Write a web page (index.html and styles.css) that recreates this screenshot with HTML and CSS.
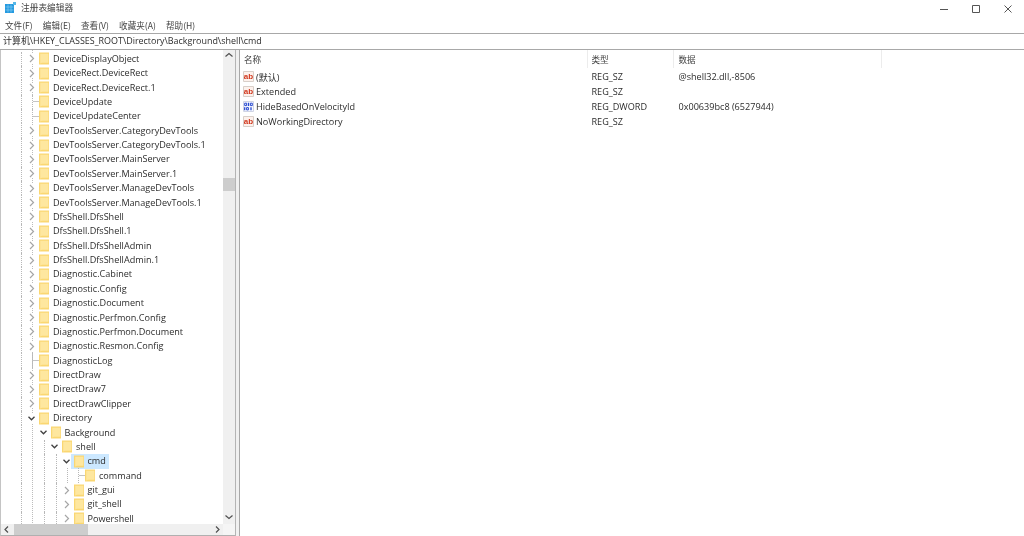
FILE: index.html
```html
<!DOCTYPE html>
<html lang="zh">
<head>
<meta charset="utf-8">
<title>注册表编辑器</title>
<link rel="stylesheet" href="styles.css">
</head>
<body>
<svg class="defs" width="0" height="0">
  <symbol id="folder" viewBox="0 0 10 13"><path d="M0 .5H10V12.5H0Z" fill="#fad772"/><path d="M1.2 1.8H9.4V10.8H3L1.2 11.4Z" fill="#fee79f"/></symbol>
  <symbol id="right" viewBox="0 0 7 9"><path d="M2 1L5.5 4.5L2 8" fill="none" stroke="#a6a6a6" stroke-width="1.2"/></symbol>
  <symbol id="down" viewBox="0 0 7 9"><path d="M.5 2.8L3.5 5.8L6.5 2.8" fill="none" stroke="#404040" stroke-width="1.3"/></symbol>
  <symbol id="bin" viewBox="0 0 11 11"><path d="M.5 .5H10.5V10.5H.5Z" fill="#f6f8ff" stroke="#d0d4e4"/><path d="M1.7 2.2H3.6V4.6H1.7ZM7.4 2.2H9.3V4.6H7.4ZM3.6 6.6H5.4V8.9H3.6Z" fill="none" stroke="#2a4bd0" stroke-width="1"/><path d="M5.5 1.8V5M1.7 6.2V9.2M8 6.2V9.2" fill="none" stroke="#2a4bd0" stroke-width="1.3"/></symbol>
</svg>
<div class="app">
  <header class="titlebar">
    <svg class="appicon" viewBox="0 0 11 11"><path d="M0 2H9V11H0Z" fill="#259ae0"/><path d="M.5 5H8.5M.5 8H8.5M3 2.5V10.5M6 2.5V10.5" stroke="#8fd0f2" stroke-width=".6" fill="none"/><path d="M8 0H11V3H8Z" fill="#57b8e8"/></svg>
    <span class="apptitle">注册表编辑器</span>
    <div class="winbtns">
      <svg viewBox="0 0 10 10"><path d="M1 5.5H9" stroke="#555" fill="none"/></svg>
      <svg viewBox="0 0 10 10"><path d="M1.5 1.5H8.5V8.5H1.5Z" stroke="#555" fill="none"/></svg>
      <svg viewBox="0 0 10 10"><path d="M1.5 1.5L8.5 8.5M8.5 1.5L1.5 8.5" stroke="#555" fill="none"/></svg>
    </div>
  </header>
  <nav class="menubar">
    <span>文件(F)</span><span>编辑(E)</span><span>查看(V)</span><span>收藏夹(A)</span><span>帮助(H)</span>
  </nav>
  <div class="address">计算机\HKEY_CLASSES_ROOT\Directory\Background\shell\cmd</div>
  <main class="main">
    <section class="treepane">
      <div class="treearea">
        <div class="tree">
          <div class="row"><i class="g0"></i><svg class="tw"><use href="#right"/></svg><svg class="fo"><use href="#folder"/></svg><span>DeviceDisplayObject</span></div>
          <div class="row"><i class="g0"></i><svg class="tw"><use href="#right"/></svg><svg class="fo"><use href="#folder"/></svg><span>DeviceRect.DeviceRect</span></div>
          <div class="row"><i class="g0"></i><svg class="tw"><use href="#right"/></svg><svg class="fo"><use href="#folder"/></svg><span>DeviceRect.DeviceRect.1</span></div>
          <div class="row"><i class="g0"></i><i class="leaf"></i><svg class="fo"><use href="#folder"/></svg><span>DeviceUpdate</span></div>
          <div class="row"><i class="g0"></i><i class="leaf"></i><svg class="fo"><use href="#folder"/></svg><span>DeviceUpdateCenter</span></div>
          <div class="row"><i class="g0"></i><svg class="tw"><use href="#right"/></svg><svg class="fo"><use href="#folder"/></svg><span>DevToolsServer.CategoryDevTools</span></div>
          <div class="row"><i class="g0"></i><svg class="tw"><use href="#right"/></svg><svg class="fo"><use href="#folder"/></svg><span>DevToolsServer.CategoryDevTools.1</span></div>
          <div class="row"><i class="g0"></i><svg class="tw"><use href="#right"/></svg><svg class="fo"><use href="#folder"/></svg><span>DevToolsServer.MainServer</span></div>
          <div class="row"><i class="g0"></i><svg class="tw"><use href="#right"/></svg><svg class="fo"><use href="#folder"/></svg><span>DevToolsServer.MainServer.1</span></div>
          <div class="row"><i class="g0"></i><svg class="tw"><use href="#right"/></svg><svg class="fo"><use href="#folder"/></svg><span>DevToolsServer.ManageDevTools</span></div>
          <div class="row"><i class="g0"></i><svg class="tw"><use href="#right"/></svg><svg class="fo"><use href="#folder"/></svg><span>DevToolsServer.ManageDevTools.1</span></div>
          <div class="row"><i class="g0"></i><svg class="tw"><use href="#right"/></svg><svg class="fo"><use href="#folder"/></svg><span>DfsShell.DfsShell</span></div>
          <div class="row"><i class="g0"></i><svg class="tw"><use href="#right"/></svg><svg class="fo"><use href="#folder"/></svg><span>DfsShell.DfsShell.1</span></div>
          <div class="row"><i class="g0"></i><svg class="tw"><use href="#right"/></svg><svg class="fo"><use href="#folder"/></svg><span>DfsShell.DfsShellAdmin</span></div>
          <div class="row"><i class="g0"></i><svg class="tw"><use href="#right"/></svg><svg class="fo"><use href="#folder"/></svg><span>DfsShell.DfsShellAdmin.1</span></div>
          <div class="row"><i class="g0"></i><svg class="tw"><use href="#right"/></svg><svg class="fo"><use href="#folder"/></svg><span>Diagnostic.Cabinet</span></div>
          <div class="row"><i class="g0"></i><svg class="tw"><use href="#right"/></svg><svg class="fo"><use href="#folder"/></svg><span>Diagnostic.Config</span></div>
          <div class="row"><i class="g0"></i><svg class="tw"><use href="#right"/></svg><svg class="fo"><use href="#folder"/></svg><span>Diagnostic.Document</span></div>
          <div class="row"><i class="g0"></i><svg class="tw"><use href="#right"/></svg><svg class="fo"><use href="#folder"/></svg><span>Diagnostic.Perfmon.Config</span></div>
          <div class="row"><i class="g0"></i><svg class="tw"><use href="#right"/></svg><svg class="fo"><use href="#folder"/></svg><span>Diagnostic.Perfmon.Document</span></div>
          <div class="row"><i class="g0"></i><svg class="tw"><use href="#right"/></svg><svg class="fo"><use href="#folder"/></svg><span>Diagnostic.Resmon.Config</span></div>
          <div class="row"><i class="g0"></i><i class="leaf"></i><svg class="fo"><use href="#folder"/></svg><span>DiagnosticLog</span></div>
          <div class="row"><i class="g0"></i><svg class="tw"><use href="#right"/></svg><svg class="fo"><use href="#folder"/></svg><span>DirectDraw</span></div>
          <div class="row"><i class="g0"></i><svg class="tw"><use href="#right"/></svg><svg class="fo"><use href="#folder"/></svg><span>DirectDraw7</span></div>
          <div class="row"><i class="g0"></i><svg class="tw"><use href="#right"/></svg><svg class="fo"><use href="#folder"/></svg><span>DirectDrawClipper</span></div>
          <div class="row"><i class="g0"></i><svg class="tw"><use href="#down"/></svg><svg class="fo"><use href="#folder"/></svg><span>Directory</span></div>
          <div class="row"><i class="g0"></i><i class="g"></i><svg class="tw"><use href="#down"/></svg><svg class="fo"><use href="#folder"/></svg><span>Background</span></div>
          <div class="row"><i class="g0"></i><i class="g"></i><i class="g"></i><svg class="tw"><use href="#down"/></svg><svg class="fo"><use href="#folder"/></svg><span>shell</span></div>
          <div class="row"><i class="g0"></i><i class="g"></i><i class="g"></i><i class="g"></i><svg class="tw"><use href="#down"/></svg><div class="selbox"><svg class="fo"><use href="#folder"/></svg><span>cmd</span></div></div>
          <div class="row"><i class="g0"></i><i class="g"></i><i class="g"></i><i class="g"></i><i class="g"></i><i class="leaf"></i><svg class="fo"><use href="#folder"/></svg><span>command</span></div>
          <div class="row"><i class="g0"></i><i class="g"></i><i class="g"></i><i class="g"></i><svg class="tw"><use href="#right"/></svg><svg class="fo"><use href="#folder"/></svg><span>git_gui</span></div>
          <div class="row"><i class="g0"></i><i class="g"></i><i class="g"></i><i class="g"></i><svg class="tw"><use href="#right"/></svg><svg class="fo"><use href="#folder"/></svg><span>git_shell</span></div>
          <div class="row"><i class="g0"></i><i class="g"></i><i class="g"></i><i class="g"></i><svg class="tw"><use href="#right"/></svg><svg class="fo"><use href="#folder"/></svg><span>Powershell</span></div>
        </div>
        <div class="vscroll">
          <svg class="sb-arrow"><path d="M2.5 6.5L6 3.5L9.5 6.5" fill="none" stroke="#505050" stroke-width="1.2"/></svg>
          <div class="vtrack"><div class="vthumb"></div></div>
          <svg class="sb-arrow"><path d="M2.5 3.5L6 6.5L9.5 3.5" fill="none" stroke="#505050" stroke-width="1.2"/></svg>
        </div>
      </div>
      <div class="hscroll">
        <svg class="sb-harrow"><path d="M7 2.5L4 5.5L7 8.5" fill="none" stroke="#505050" stroke-width="1.2"/></svg>
        <div class="htrack"><div class="hthumb"></div></div>
        <svg class="sb-harrow"><path d="M5 2.5L8 5.5L5 8.5" fill="none" stroke="#505050" stroke-width="1.2"/></svg>
        <div class="corner"></div>
      </div>
    </section>
    <div class="splitter"></div>
    <section class="listpane">
      <div class="listhead">
        <div class="c1">名称</div><div class="c2">类型</div><div class="c3">数据</div>
      </div>
      <div class="listrows">
        <div class="lrow"><div class="c1"><svg class="vi" viewBox="0 0 11 11"><path d="M.5 .5H10.5V10.5H.5Z" fill="#fdf1ec" stroke="#d8cfc9"/><text x="5.5" y="8" text-anchor="middle" class="abtext">ab</text></svg>(默认)</div><div class="c2">REG_SZ</div><div class="c3">@shell32.dll,-8506</div></div>
        <div class="lrow"><div class="c1"><svg class="vi" viewBox="0 0 11 11"><path d="M.5 .5H10.5V10.5H.5Z" fill="#fdf1ec" stroke="#d8cfc9"/><text x="5.5" y="8" text-anchor="middle" class="abtext">ab</text></svg>Extended</div><div class="c2">REG_SZ</div><div class="c3"></div></div>
        <div class="lrow"><div class="c1"><svg class="vi"><use href="#bin"/></svg>HideBasedOnVelocityId</div><div class="c2">REG_DWORD</div><div class="c3">0x00639bc8 (6527944)</div></div>
        <div class="lrow"><div class="c1"><svg class="vi" viewBox="0 0 11 11"><path d="M.5 .5H10.5V10.5H.5Z" fill="#fdf1ec" stroke="#d8cfc9"/><text x="5.5" y="8" text-anchor="middle" class="abtext">ab</text></svg>NoWorkingDirectory</div><div class="c2">REG_SZ</div><div class="c3"></div></div>
      </div>
    </section>
  </main>
</div>
</body>
</html>
```
FILE: styles.css
```css
* { box-sizing: border-box; }
html, body { margin: 0; height: 100%; background: #fff; overflow: hidden; }
body { font-family: "Open Sans", "Noto Sans CJK SC", sans-serif; font-size: 9.1px; color: #2c2c2c; }
.defs { position: absolute; }
.abtext { font: bold 8px "Liberation Sans", sans-serif; fill: #d0361c; }
.app { width: 1024px; height: 536px; display: flex; flex-direction: column; filter: blur(0.4px); }

.titlebar { height: 18px; display: flex; align-items: center; padding: 0 0 3px 5px; flex: none; }
.appicon { width: 11px; height: 11px; margin-right: 5px; }
.apptitle { font-family: "Noto Sans CJK SC", sans-serif; font-size: 8.7px; color: #444; }
.winbtns { margin-left: auto; display: flex; gap: 22px; padding-right: 11px; margin-top: 3px; }
.winbtns svg { width: 10px; height: 10px; }

.menubar { height: 15px; display: flex; padding: 0 0 2px 5px; gap: 10.1px; align-items: center; flex: none; font-family: "Noto Sans CJK SC", sans-serif; font-size: 8.6px; color: #444; }

.address { height: 17px; border-top: 1px solid #a8a8a8; border-bottom: 1px solid #a8a8a8; padding-left: 3px; line-height: 14px; flex: none; white-space: nowrap; font-size: 8.95px; }

.main { flex: 1; display: flex; min-height: 0; }
.treepane { width: 235px; display: flex; flex-direction: column; border-left: 1px solid #c4c4c4; border-bottom: 1px solid #b0b0b0; flex: none; }
.treearea { flex: 1; display: flex; min-height: 0; }
.tree { flex: 1; padding-top: 1.6px; overflow: hidden; background: repeating-linear-gradient(#bcbcbc 0 1px, transparent 1px 2px) 31px 0 / 1px 100% no-repeat; }
.row { height: 14.375px; display: flex; align-items: center; white-space: nowrap; }
.row span { margin-left: 3px; padding: 0 1px; line-height: 14px; }
.g0 { width: 21px; height: 100%; flex: none; border-right: 1px dotted #b8b8b8; }
.g { width: 11.5px; height: 100%; flex: none; border-right: 1px dotted #b8b8b8; }
.g0 + .g { border-right-color: transparent; }
.tw { width: 7px; height: 9px; margin: 0 4px 0 6px; flex: none; background: #fff; }
.leaf { width: 7px; height: 100%; margin-left: 10px; flex: none; border-left: 1px dotted #b8b8b8; background: linear-gradient(#c4c4c4, #c4c4c4) 0 50% / 100% 1px no-repeat; }
.fo { width: 10px; height: 13px; flex: none; }
.selbox { display: flex; align-items: center; height: 15px; background: #cce8ff; margin-left: -2.5px; padding: 0 2px 0 2.5px; }

.vscroll { width: 12px; display: flex; flex-direction: column; background: #f0f0f0; flex: none; }
.sb-arrow { width: 12px; height: 12px; flex: none; }
.vtrack { flex: 1; padding-top: 116px; }
.vthumb { height: 13px; background: #cdcdcd; }
.hscroll { height: 11px; display: flex; background: #f0f0f0; flex: none; }
.sb-harrow { width: 12px; height: 11px; flex: none; }
.htrack { flex: 1; padding-left: 1px; }
.hthumb { width: 74px; height: 100%; background: #cdcdcd; }
.corner { width: 12px; background: #f5f5f5; flex: none; }

.splitter { width: 5px; border-left: 1.5px solid #b4b4b4; border-right: 1px solid #a8a8a8; background: #f0f0f0; flex: none; }

.listpane { flex: 1; min-width: 0; }
.listhead { height: 18px; display: flex; align-items: center; font-family: "Noto Sans CJK SC", sans-serif; font-size: 8.6px; color: #444; }
.listhead .c1, .listhead .c2, .listhead .c3 { height: 100%; line-height: 18px; border-right: 1px solid #ececec; }
.c1 { width: 347.5px; padding-left: 4px; display: flex; align-items: center; white-space: nowrap; }
.c2 { width: 86px; padding-left: 4px; white-space: nowrap; }
.c3 { width: 208px; padding-left: 5px; white-space: nowrap; }
.listrows { padding-top: 1px; }
.lrow { height: 15px; display: flex; align-items: center; }
.lrow .c1 { padding-left: 3px; }
.vi { width: 11px; height: 11px; margin-right: 2px; flex: none; }
```
